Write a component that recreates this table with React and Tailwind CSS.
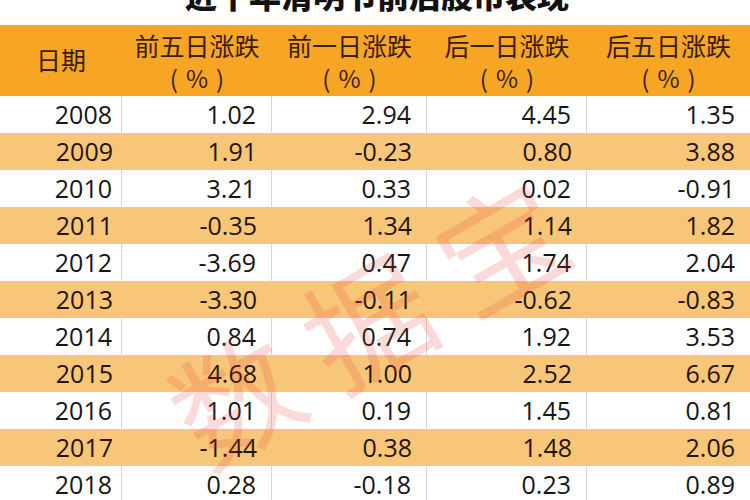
import React from 'react';

const rows = [
  ['2008', '1.02', '2.94', '4.45', '1.35'],
  ['2009', '1.91', '-0.23', '0.80', '3.88'],
  ['2010', '3.21', '0.33', '0.02', '-0.91'],
  ['2011', '-0.35', '1.34', '1.14', '1.82'],
  ['2012', '-3.69', '0.47', '1.74', '2.04'],
  ['2013', '-3.30', '-0.11', '-0.62', '-0.83'],
  ['2014', '0.84', '0.74', '1.92', '3.53'],
  ['2015', '4.68', '1.00', '2.52', '6.67'],
  ['2016', '1.01', '0.19', '1.45', '0.81'],
  ['2017', '-1.44', '0.38', '1.48', '2.06'],
  ['2018', '0.28', '-0.18', '0.23', '0.89'],
];

const heads = ['前五日涨跌', '前一日涨跌', '后一日涨跌', '后五日涨跌'];

const cjk = { fontFamily: '"Noto Sans CJK SC", "Noto Sans", sans-serif' };
const num = { fontFamily: '"Open Sans", "Liberation Sans", sans-serif' };

const App = () => {
  return (
    <div className="w-[750px] h-[500px] overflow-hidden bg-white relative">
      {/* title, mostly cut off by the top edge */}
      <div className="h-[25px] overflow-hidden flex justify-center items-start">
        <div className="text-[32px] leading-[32px] font-black text-[#111] pl-[4px] mt-[-22px]" style={cjk}>
          近十年清明节前后股市表现
        </div>
      </div>

      <div className="grid grid-cols-[122px_150px_155px_160px_163px] h-[71px] bg-[#f6a624] text-[#3a1c00]" style={cjk}>
        <div className="flex items-center justify-center text-[25px] pb-[2px]">日期</div>
        {heads.map((h) => (
          <div key={h} className="flex flex-col items-center pt-[2px]">
            <span className="text-[25px] leading-[36px]">{h}</span>
            <span className="flex gap-[8px] text-[24px] leading-[30px]">
              <span>(</span>
              <span>%</span>
              <span>)</span>
            </span>
          </div>
        ))}
      </div>

      <div style={num}>
        {rows.map((r, i) => {
          const alt = i % 2 === 1;
          return (
            <div
              key={r[0]}
              className={`grid grid-cols-[122px_150px_155px_160px_163px] h-[37px] text-[25px] ${
                alt ? 'bg-[#f8c679] text-[#241400]' : 'bg-white text-[#151515]'
              }`}
            >
              {r.map((c, j) => (
                <div
                  key={j}
                  className={`flex items-center justify-end ${j === 0 ? 'pr-[9px]' : 'pr-[15px]'} ${
                    !alt && j < 4 ? 'border-r border-[#d6d6d6]' : ''
                  }`}
                >
                  {c}
                </div>
              ))}
            </div>
          );
        })}
      </div>

      {/* watermark */}
      <div
        className="absolute left-[150px] top-[255px] flex gap-[28px] text-[125px] leading-none font-normal text-[#e8403a] opacity-[0.18] rotate-[-30deg] origin-center pointer-events-none"
        style={cjk}
      >
        <span>数</span>
        <span>据</span>
        <span>宝</span>
      </div>
    </div>
  );
};

export default App;
